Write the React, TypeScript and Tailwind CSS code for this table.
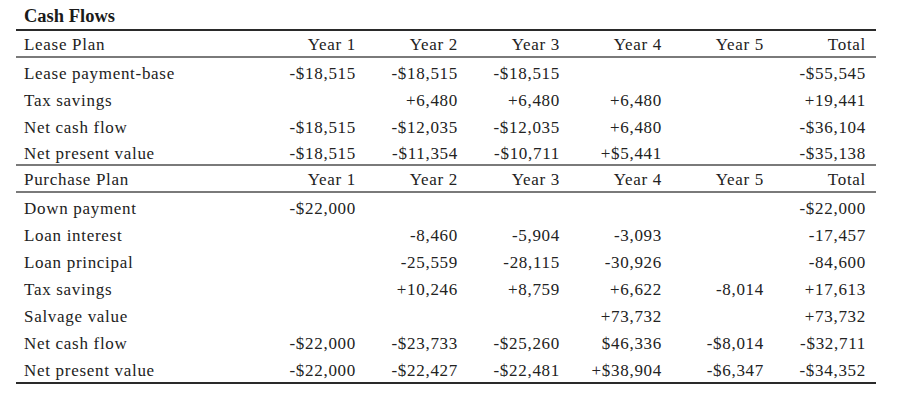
import React from 'react';

type Row = { label: string; values: string[] };

const leaseRows: Row[] = [
  { label: 'Lease payment-base', values: ['-$18,515', '-$18,515', '-$18,515', '', '', '-$55,545'] },
  { label: 'Tax savings', values: ['', '+6,480', '+6,480', '+6,480', '', '+19,441'] },
  { label: 'Net cash flow', values: ['-$18,515', '-$12,035', '-$12,035', '+6,480', '', '-$36,104'] },
  { label: 'Net present value', values: ['-$18,515', '-$11,354', '-$10,711', '+$5,441', '', '-$35,138'] },
];

const purchaseRows: Row[] = [
  { label: 'Down payment', values: ['-$22,000', '', '', '', '', '-$22,000'] },
  { label: 'Loan interest', values: ['', '-8,460', '-5,904', '-3,093', '', '-17,457'] },
  { label: 'Loan principal', values: ['', '-25,559', '-28,115', '-30,926', '', '-84,600'] },
  { label: 'Tax savings', values: ['', '+10,246', '+8,759', '+6,622', '-8,014', '+17,613'] },
  { label: 'Salvage value', values: ['', '', '', '+73,732', '', '+73,732'] },
  { label: 'Net cash flow', values: ['-$22,000', '-$23,733', '-$25,260', '$46,336', '-$8,014', '-$32,711'] },
  { label: 'Net present value', values: ['-$22,000', '-$22,427', '-$22,481', '+$38,904', '-$6,347', '-$34,352'] },
];

const years = ['Year 1', 'Year 2', 'Year 3', 'Year 4', 'Year 5', 'Total'];

const grid = 'grid grid-cols-[248px_repeat(6,102px)] items-center';

const HeaderRow: React.FC<{ title: string }> = ({ title }) => (
  <div className={`${grid} h-[27px] pt-[2px] border-b-2 border-[#7a7a7a]`}>
    <span className="pl-2">{title}</span>
    {years.map((y) => (
      <span key={y} className="pr-[10px] text-right">
        {y}
      </span>
    ))}
  </div>
);

const DataRow: React.FC<{ row: Row; className?: string }> = ({ row, className = '' }) => (
  <div className={`${grid} h-[27px] pt-[3px] ${className}`}>
    <span className="pl-2">{row.label}</span>
    {row.values.map((v, i) => (
      <span key={i} className="pr-[10px] text-right">
        {v}
      </span>
    ))}
  </div>
);

const App: React.FC = () => {
  return (
    <div
      className="w-[900px] h-[403px] bg-white pl-4 text-[17px] leading-none tracking-[0.7px] text-[#222]"
      style={{ fontFamily: '"Liberation Serif", serif' }}
    >
      {/* Title */}
      <div className="h-[29px] pl-2 pt-[7px] text-[18.5px] font-bold tracking-normal text-[#1a1a1a]">Cash Flows</div>

      {/* Table */}
      <div className="w-[860px] border-t-2 border-b-2 border-t-[#2a2a2a] border-b-[#2a2a2a]">
        <HeaderRow title="Lease Plan" />
        {leaseRows.map((r, i) => (
          <DataRow key={r.label} row={r} className={i === leaseRows.length - 1 ? 'border-b-2 border-[#7a7a7a]' : ''} />
        ))}
        <HeaderRow title="Purchase Plan" />
        {purchaseRows.map((r) => (
          <DataRow key={r.label} row={r} />
        ))}
      </div>
    </div>
  );
};

export default App;
